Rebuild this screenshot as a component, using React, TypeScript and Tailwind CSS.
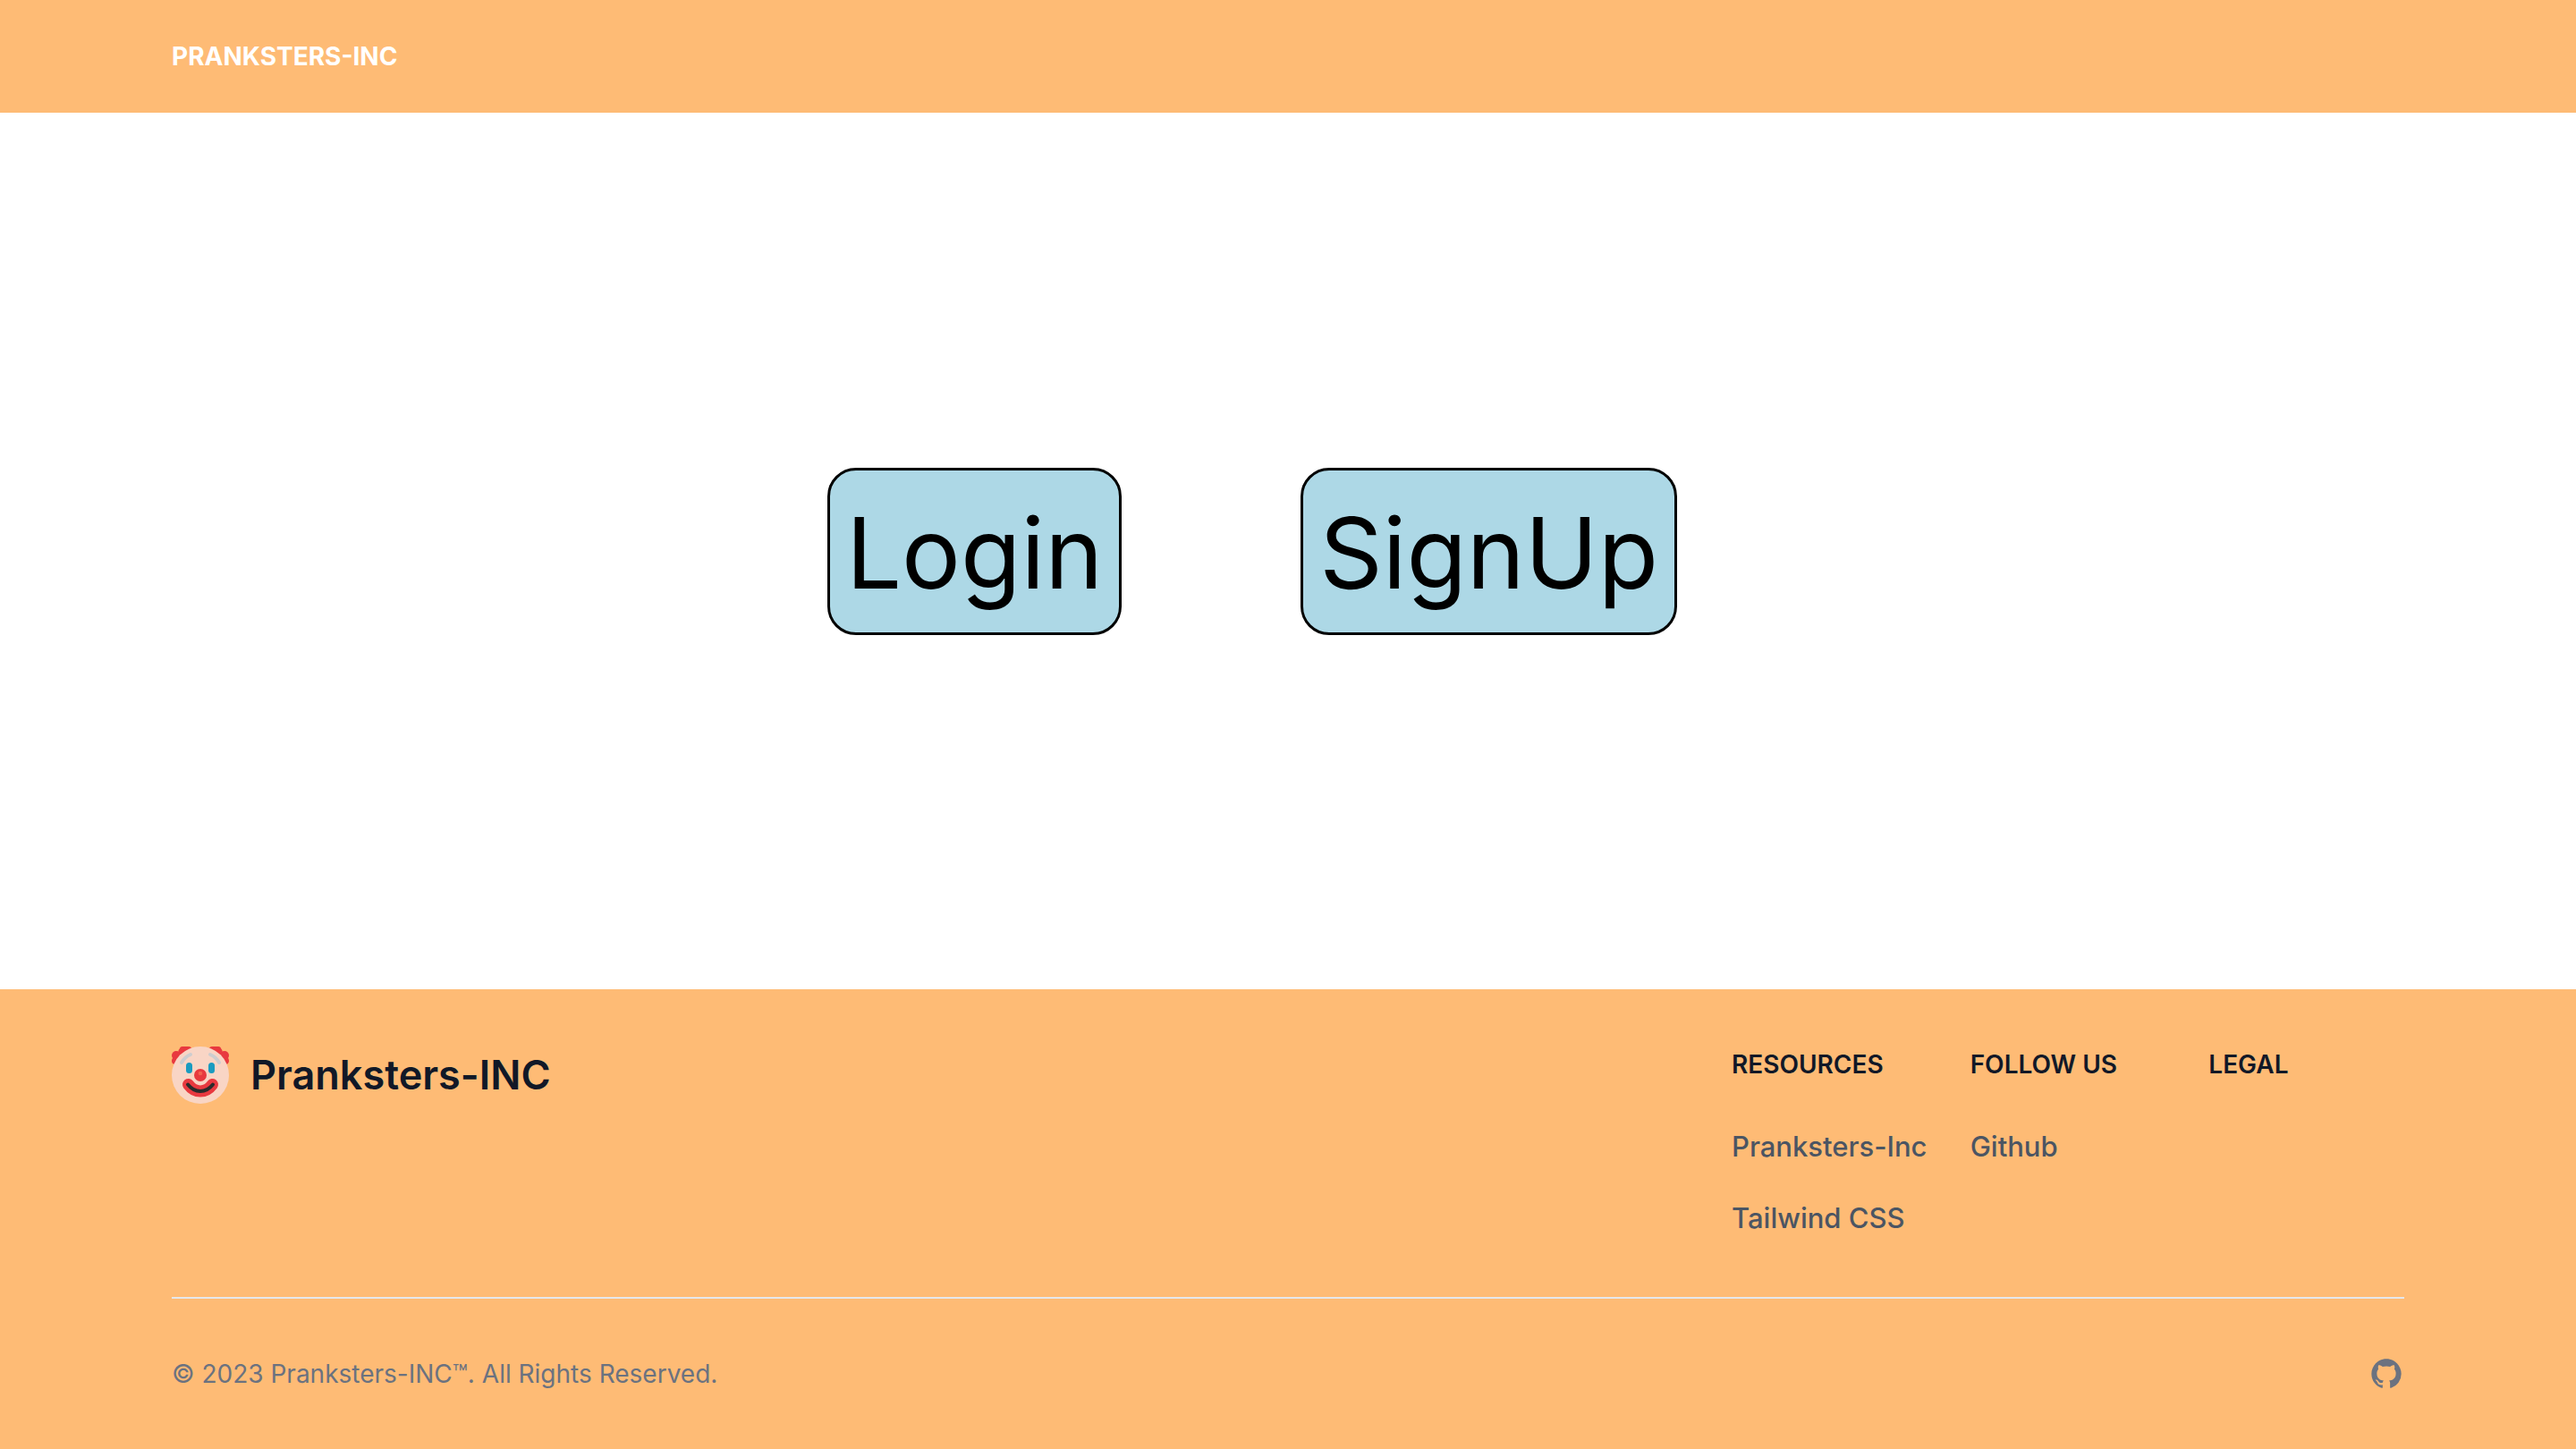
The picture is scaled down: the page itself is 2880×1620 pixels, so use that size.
const resources = ["Pranksters-Inc", "Tailwind CSS"];
const social = ["Github"];

function ClownLogo() {
  return (
    <svg viewBox="0 0 64 64" className="size-16 shrink-0" role="img" aria-label="Clown face">
      <g fill="#e8393f">
        <circle cx="14" cy="7" r="7" />
        <circle cx="5" cy="10" r="5" />
        <circle cx="4" cy="16" r="4" />
        <rect x="9" y="0" width="13" height="10" rx="3" />
        <circle cx="50" cy="7" r="7" />
        <circle cx="59" cy="10" r="5" />
        <circle cx="60" cy="16" r="4" />
        <rect x="42" y="0" width="13" height="10" rx="3" />
      </g>
      <circle cx="32" cy="32" r="32" fill="#f9d5c5" />
      <g fill="none" stroke="#cdcdcf" strokeWidth="4" strokeLinecap="round">
        <path d="M11 18C13.500 13.500 16.500 10.800 21 9" />
        <path d="M53 18C50.500 13.500 47.500 10.800 43 9" />
      </g>
      <rect x="16" y="18" width="7" height="12" rx="3.500" fill="#1a9bc0" />
      <rect x="41" y="18" width="7" height="12" rx="3.500" fill="#1a9bc0" />
      <circle cx="32" cy="32" r="7" fill="#e8393f" />
      <circle cx="32" cy="30" r="2.300" fill="#f2614f" />
      <path d="M18.500 42.500C26 52.500 38 52.500 45.500 42.500" fill="none" stroke="#e8393f" strokeWidth="13" strokeLinecap="round" />
      <path d="M18 42.500C26 52.500 38 52.500 46 42.500" fill="none" stroke="#2b2b2b" strokeWidth="4" strokeLinecap="round" />
    </svg>
  );
}

function GithubIcon() {
  return (
    <svg viewBox="0 0 24 24" className="size-10" fill="currentColor" aria-hidden="true">
      <path
        fillRule="evenodd"
        clipRule="evenodd"
        d="M12 2C6.477 2 2 6.484 2 12.017c0 4.425 2.865 8.18 6.839 9.504.5.092.682-.217.682-.483 0-.237-.008-.868-.013-1.703-2.782.605-3.369-1.343-3.369-1.343-.454-1.158-1.11-1.466-1.11-1.466-.908-.62.069-.608.069-.608 1.003.07 1.531 1.032 1.531 1.032.892 1.53 2.341 1.088 2.91.832.092-.647.35-1.088.636-1.338-2.22-.253-4.555-1.113-4.555-4.951 0-1.093.39-1.988 1.029-2.688-.103-.253-.446-1.272.098-2.65 0 0 .84-.27 2.75 1.026A9.564 9.564 0 0112 6.844c.85.004 1.705.115 2.504.337 1.909-1.296 2.747-1.027 2.747-1.027.546 1.379.202 2.398.1 2.651.64.7 1.028 1.595 1.028 2.688 0 3.848-2.339 4.695-4.566 4.943.359.309.678.92.678 1.855 0 1.338-.012 2.419-.012 2.747 0 .268.18.58.688.482A10.019 10.019 0 0022 12.017C22 6.484 17.522 2 12 2z"
      />
    </svg>
  );
}

function LinkColumn({ title, links }: { title: string; links: string[] }) {
  return (
    <div>
      <h2 className="mb-12 text-[28px] leading-10 font-semibold text-[#111827] uppercase">{title}</h2>
      <ul className="flex flex-col gap-8 text-[31px] leading-12 font-medium whitespace-nowrap text-[#4b5563]">
        {links.map((link) => (
          <li key={link}>
            <a href="#">{link}</a>
          </li>
        ))}
      </ul>
    </div>
  );
}

function BigButton({ label }: { label: string }) {
  return (
    <button
      type="button"
      className="rounded-[32px] border-3 border-black bg-[#add8e6] px-[18px] pt-8 pb-7 text-[110px] leading-[121px] text-black"
    >
      {label}
    </button>
  );
}

export default function App() {
  return (
    <div className="flex min-h-screen flex-col bg-white font-['Inter',sans-serif]">
      <header className="bg-[#febb75] px-48 py-[43px]">
        <a href="#" className="block text-[28px] leading-10 font-bold text-white uppercase">
          Pranksters-Inc
        </a>
      </header>

      <main className="flex flex-1 items-center justify-center gap-[200px] pr-20">
        <BigButton label="Login" />
        <BigButton label="SignUp" />
      </main>

      <footer className="bg-[#febb75] px-48 py-16">
        <div className="flex items-start justify-between">
          <a href="#" className="flex items-center gap-6">
            <ClownLogo />
            <span className="text-[45px] leading-16 font-semibold text-[#111827]">Pranksters-INC</span>
          </a>
          <div className="grid w-[752px] grid-cols-3 gap-12">
            <LinkColumn title="Resources" links={resources} />
            <LinkColumn title="Follow us" links={social} />
            <LinkColumn title="Legal" links={[]} />
          </div>
        </div>
        <hr className="my-16 border-t-2 border-[#e5e7eb]" />
        <div className="flex items-center justify-between text-[#6b7280]">
          <span className="text-[28px] leading-10">© 2023 Pranksters-INC™. All Rights Reserved.</span>
          <a href="#" aria-label="GitHub page">
            <GithubIcon />
          </a>
        </div>
      </footer>
    </div>
  );
}
